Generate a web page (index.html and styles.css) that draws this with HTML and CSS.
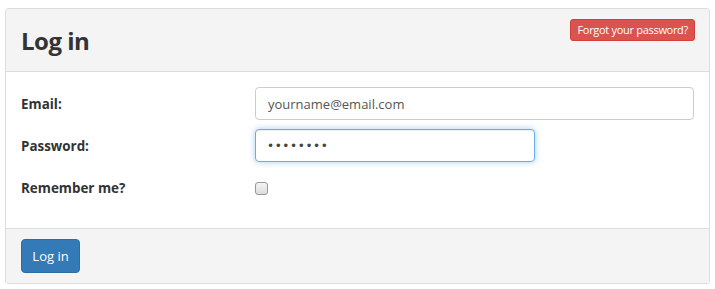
FILE: index.html
```html
<!DOCTYPE html>
<html>
<head>
<meta charset="utf-8">
<link rel="stylesheet" href="styles.css">
</head>
<body>
<div class="panel">
  <div class="panel-heading">
    <h1 class="title">Log in</h1>
    <a class="btn-forgot">Forgot your password?</a>
  </div>
  <div class="panel-body">
    <div class="row">
      <label class="label">Email:</label>
      <div class="field"><input class="input" type="text" value="yourname@email.com"></div>
    </div>
    <div class="row">
      <label class="label">Password:</label>
      <div class="field"><input class="input input-focus" type="password" value="password"></div>
    </div>
    <div class="row row-check">
      <label class="label">Remember me?</label>
      <div class="field"><span class="checkbox"></span></div>
    </div>
  </div>
  <div class="panel-footer">
    <button class="btn-login">Log in</button>
  </div>
</div>
</body>
</html>
```
FILE: styles.css
```css
* { box-sizing: border-box; }
html, body { margin: 0; padding: 0; background: #fff; }
body {
  padding: 8px 6px 0 5px;
  font-family: "Open Sans", "Noto Sans", sans-serif;
  color: #333;
  font-size: 13px;
}
.panel {
  width: 705px;
  height: 276px;
  border: 1px solid #ddd;
  border-radius: 3px;
  display: flex;
  flex-direction: column;
  overflow: hidden;
}
.panel-heading {
  height: 63px;
  background: #f4f4f4;
  border-bottom: 1px solid #ddd;
  display: flex;
  justify-content: space-between;
  align-items: flex-start;
  padding: 10px 14px 0 15px;
}
.title {
  margin: 5px 0 0 0;
  font-size: 24px;
  font-weight: 700;
  line-height: 34px;
  color: #333;
  letter-spacing: -0.5px;
}
.btn-forgot {
  margin-top: 0;
  background: #d9534f;
  border: 1px solid #d43f3a;
  color: #fff;
  font-size: 11px;
  line-height: 20px;
  height: 22px;
  padding: 0 6px;
  border-radius: 3px;
  letter-spacing: -0.3px;
}
.panel-body {
  flex: 1;
  padding: 15px 15px 0 15px;
  display: flex;
  flex-direction: column;
  gap: 9px;
}
.row {
  display: flex;
  align-items: center;
}
.label {
  width: 234px;
  font-weight: 700;
  font-size: 13.4px;
  color: #333;
}
.field { flex: 1; display: flex; }
.input {
  width: 100%;
  height: 33px;
  border: 1px solid #ccc;
  border-radius: 4px;
  padding: 0 12px;
  font-family: "Open Sans", "Noto Sans", sans-serif;
  font-size: 13px;
  color: #555;
  background: #fff;
  outline: none;
}
.input-focus {
  width: 280px;
  border-color: #66afe9;
  box-shadow: inset 0 1px 1px rgba(0,0,0,.075), 0 0 6px rgba(102,175,233,.6);
  font-family: "DejaVu Sans", sans-serif;
  font-size: 12px;
  letter-spacing: 0.6px;
  padding-left: 11px;
  color: #444;
}
.row-check { margin-top: 8px; }
.checkbox {
  width: 13px;
  height: 13px;
  border: 1px solid #999;
  border-radius: 3px;
  background: linear-gradient(#f4f4f4, #dcdcdc);
}
.panel-footer {
  height: 55px;
  flex: none;
  background: #f4f4f4;
  border-top: 1px solid #ddd;
  padding: 10px 15px;
}
.btn-login {
  height: 34px;
  width: 59px;
  background: #337ab7;
  border: 1px solid #2e6da4;
  border-radius: 4px;
  color: #fff;
  font-family: "Open Sans", "Noto Sans", sans-serif;
  font-size: 13px;
  padding: 0;
}
```
